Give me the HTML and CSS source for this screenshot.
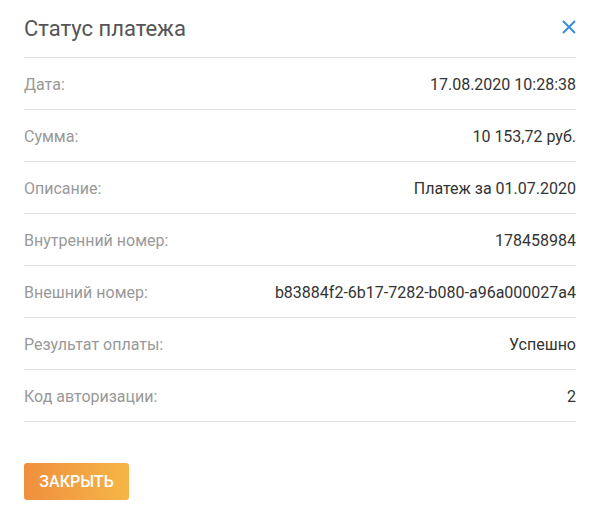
FILE: index.html
```html
<!DOCTYPE html>
<html lang="ru">
<head>
    <meta charset="UTF-8">
    <meta name="viewport" content="width=device-width, initial-scale=1.0">
    <title>Статус платежа</title>
    <link rel="stylesheet" href="styles.css">
</head>
<body>
    <div class="modal">
        <div class="modal-header">
            <h2 class="modal-title">Статус платежа</h2>
            <button class="close-icon" type="button">
                <svg width="14" height="14" viewBox="0 0 14 14">
                    <path d="M1 1 L13 13 M13 1 L1 13" stroke="#3a8fdc" stroke-width="2" fill="none"/>
                </svg>
            </button>
        </div>

        <div class="info-row">
            <span class="label">Дата:</span>
            <span class="value">17.08.2020 10:28:38</span>
        </div>
        <div class="info-row">
            <span class="label">Сумма:</span>
            <span class="value">10 153,72 руб.</span>
        </div>
        <div class="info-row">
            <span class="label">Описание:</span>
            <span class="value">Платеж за 01.07.2020</span>
        </div>
        <div class="info-row">
            <span class="label">Внутренний номер:</span>
            <span class="value">178458984</span>
        </div>
        <div class="info-row">
            <span class="label">Внешний номер:</span>
            <span class="value">b83884f2-6b17-7282-b080-a96a000027a4</span>
        </div>
        <div class="info-row">
            <span class="label">Результат оплаты:</span>
            <span class="value">Успешно</span>
        </div>
        <div class="info-row">
            <span class="label">Код авторизации:</span>
            <span class="value">2</span>
        </div>

        <div class="modal-footer">
            <button class="btn-close" type="button">Закрыть</button>
        </div>
    </div>
</body>
</html>
```

FILE: styles.css
```css
body {
    font-family: Roboto, "Liberation Sans", sans-serif;
    margin: 0;
    background-color: #fff;
}

.modal {
    padding: 0 21px 0 24px;
}

.modal-header {
    height: 57px;
    display: flex;
    align-items: center;
    justify-content: space-between;
    border-bottom: 1px solid #e0e0e0;
}

.modal-title {
    margin: 0;
    font-size: 22px;
    font-weight: 400;
    color: #555;
}

.close-icon {
    background: none;
    border: none;
    padding: 0;
    display: flex;
    cursor: pointer;
    margin-top: -3px;
}

.info-row {
    height: 52px;
    box-sizing: border-box;
    padding-top: 2px;
    display: flex;
    align-items: center;
    justify-content: space-between;
    border-bottom: 1px solid #e0e0e0;
    font-size: 16px;
}

.label {
    color: #999;
}

.value {
    color: #333;
}

.modal-footer {
    padding-top: 41px;
}

.btn-close {
    width: 105px;
    height: 37px;
    border: none;
    border-radius: 3px;
    background: linear-gradient(to right, #f08f3e, #f5b646);
    color: #fff;
    font-family: Roboto, "Liberation Sans", sans-serif;
    font-size: 16px;
    font-weight: 500;
    text-transform: uppercase;
    cursor: pointer;
}
```
